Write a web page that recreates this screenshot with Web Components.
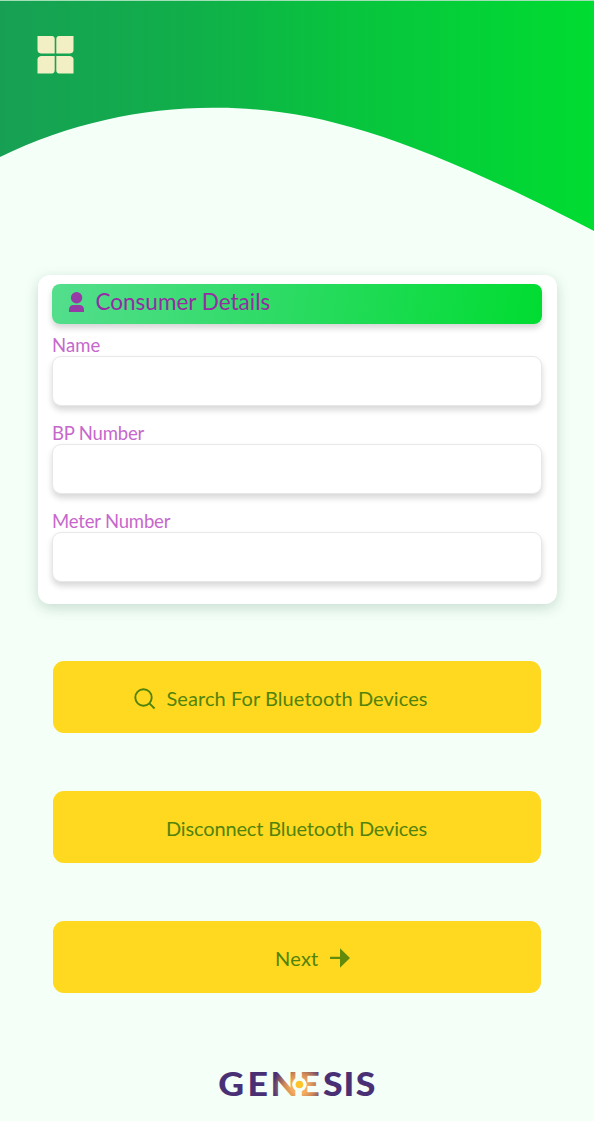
<!DOCTYPE html>
<html lang="en">
<head>
<meta charset="utf-8">
<title>Consumer Details</title>
<style>
html,body{margin:0;background:#f4fff8}
body{width:594px;height:1121px;overflow:hidden;font-family:Lato,"Open Sans",sans-serif}
</style>
</head>
<body>
<consumer-page></consumer-page>
<script>
const define = (name, html, setup) => customElements.define(name, class extends HTMLElement {
  connectedCallback() {
    if (this.shadowRoot) return;
    const t = document.createElement('template');
    t.innerHTML = html;
    this.attachShadow({mode: 'open'}).append(t.content.cloneNode(true));
    if (setup) setup(this);
  }
});

define('wave-header', `
<style>:host{display:block;height:232px}svg{display:block}</style>
<svg width="594" height="232" viewBox="0 0 594 232">
  <defs><linearGradient id="g"><stop offset="0" stop-color="#17a054"/><stop offset=".32" stop-color="#10af4a"/><stop offset=".5" stop-color="#0abe41"/><stop offset=".78" stop-color="#04d038"/><stop offset="1" stop-color="#00dc31"/></linearGradient></defs>
  <path fill="url(#g)" d="M0 0H594V231C414 138 318 108 218 107.800C145 107 70 123 0 157Z"/>
  <path fill="#a3dfb6" d="M0 0H594V1H0Z"/>
  <g fill="#f3efc5" aria-label="Menu">
    <path d="M37.500 36H52Q54.700 36.300 54.700 39V53.500H41Q37.500 53 37.500 50Z"/>
    <path d="M73.500 36H59Q56.300 36.300 56.300 39V53.500H70Q73.500 53 73.500 50Z"/>
    <path d="M37.500 73.500H52Q54.700 73.200 54.700 70V56H41Q37.500 56.500 37.500 59.500Z"/>
    <path d="M73.500 73.500H59Q56.300 73.200 56.300 70V56H70Q73.500 56.500 73.500 59.500Z"/>
  </g>
</svg>`);

define('detail-card', `
<style>
:host{display:block;box-sizing:border-box;width:519px;height:328.500px;margin:43px 0 0 37.500px;padding:9px 14.500px;border-radius:12px;background:#fff;box-shadow:0 4px 14px rgba(20,80,45,.2)}
header{display:flex;align-items:center;height:40px;border-radius:8px;background:linear-gradient(100deg,#54de8d,#2adb61 50%,#00dc31);box-shadow:0 4px 6px rgba(0,0,0,.17);color:#962ca4}
svg{margin-left:17px;width:15px;height:20px;flex:none;transform:translateY(-2px)}
h1{margin:-4px 0 0 11.500px;font-size:22.500px;font-weight:400;line-height:30px;letter-spacing:0;white-space:nowrap}
</style>
<header><svg viewBox="0 0 15 20" fill="#963aa5"><circle cx="7.600" cy="5.700" r="5.700"/><path d="M0 20V18Q0 13 5 13H10Q15 13 15 18V20Z"/></svg><h1><slot name="title"></slot></h1></header>
<slot></slot>`);

define('text-field', `
<style>
:host{display:block;margin-top:16px}
:host([first]){margin-top:10px}
label{display:block;height:22px;line-height:22px;font-size:18.500px;color:#c668cb;letter-spacing:var(--ls,-.18px);white-space:nowrap}
input{display:block;box-sizing:border-box;width:490px;height:50px;margin:0;border:1.500px solid #e8e8e8;border-radius:9px;background:#fff;box-shadow:0 4px 6px rgba(0,0,0,.16);outline:0;font:18px Lato,sans-serif;padding:0 12px}
</style>
<label for="i"></label><input id="i">`, el => {
  el.shadowRoot.querySelector('label').textContent = el.getAttribute('label');
});

define('action-button', `
<style>
:host{display:block;width:488px;height:72px;margin:0 0 58px 53px}
button{display:flex;align-items:center;box-sizing:border-box;width:100%;height:100%;padding:2px 0 0 var(--start);border:0;border-radius:11px;background:#ffd91f;color:#51830c;font:400 20px/28px Lato,"Open Sans",sans-serif;letter-spacing:var(--ls,.25px);white-space:nowrap}
::slotted(svg){flex:none}
</style>
<button><slot name="before"></slot><slot></slot><slot name="after"></slot></button>`);

define('genesis-logo', `
<style>:host{display:block;height:42px;padding:3px 0 0 216px}svg{display:block}text{font:900 33px Lato,"Open Sans",sans-serif}</style>
<svg width="166" height="44" viewBox="0 0 166 44">
  <defs>
    <radialGradient id="f" gradientUnits="userSpaceOnUse" cx="77.200" cy="24" r="25"><stop offset=".3" stop-color="#f5ac5d"/><stop offset=".58" stop-color="#c98458"/><stop offset="1" stop-color="#493074"/></radialGradient>
  </defs>
  <text transform="scale(1.080 1)" x="2.200 29.200 50.500 77 99 118 129.500" y="33.500" fill="url(#f)">GENESIS</text>
  <circle cx="83.400" cy="21.500" r="7.200" fill="#f4fff8"/><path d="M82.400 8.500h2v26h-2z" fill="#f4fff8"/><circle cx="83.400" cy="21.500" r="3.800" fill="#ffc42b"/>
</svg>`);

define('consumer-page', `
<style>
:host{display:flow-root;width:594px;height:1121px;overflow:hidden;background:#f4fff8}
.actions{display:flow-root;margin-top:57.500px}
genesis-logo{margin-top:9px}
</style>
<wave-header></wave-header>
<detail-card><span slot="title">Consumer Details</span>
<text-field first label="Name" style="--ls:.1px"></text-field><text-field label="BP Number"></text-field><text-field label="Meter Number"></text-field>
</detail-card>
<div class="actions">
<action-button style="--start:81px;--ls:.07px"><svg slot="before" width="22" height="22" viewBox="0 0 22 22" fill="none" stroke="#51830c" stroke-width="1.900" style="margin:2px 10.500px 0 0"><circle cx="9.500" cy="9.500" r="8.200"/><path d="M15.200 15.200L20.500 20.500"/></svg>Search For Bluetooth Devices</action-button>
<action-button style="--start:113px;--ls:-.15px">Disconnect Bluetooth Devices</action-button>
<action-button style="--start:222px">Next<svg slot="after" width="20" height="20" viewBox="0 0 20 20" fill="#628b0b" style="margin:0 0 0 11.500px"><path d="M0 8.800H10V.300L20 10L10 19.700V11H0Z"/></svg></action-button>
</div>
<genesis-logo></genesis-logo>`);
</script>
</body>
</html>
